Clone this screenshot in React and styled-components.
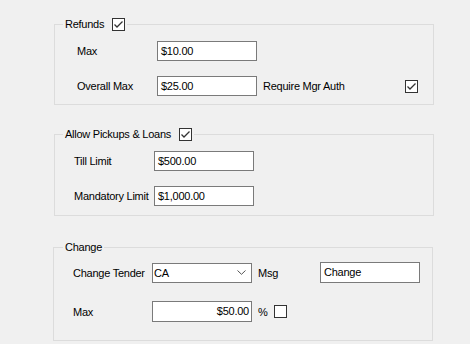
import React from "react";
import styled, { createGlobalStyle } from "styled-components";

const GlobalStyle = createGlobalStyle`
  html, body {
    margin: 0;
    padding: 0;
    background: #f0f0f0;
  }
  body {
    font-family: "Liberation Sans", Arial, sans-serif;
    font-size: 11px;
    letter-spacing: -0.25px;
    color: #000;
  }
`;

const Page = styled.div`
  width: 470px;
  height: 344px;
  box-sizing: border-box;
  padding: 18px 0 0 54px;
  overflow: hidden;
`;

const Group = styled.fieldset`
  width: 380px;
  box-sizing: border-box;
  margin: ${(p) => p.$top || 0}px 0 0 ${(p) => p.$shift || 0}px;
  padding: ${(p) => p.$pad};
  border: 1px solid #dcdcdc;
  display: flex;
  flex-direction: column;
  gap: ${(p) => p.$gap}px;
  min-width: 0;
`;

const Legend = styled.legend`
  margin-left: ${(p) => p.$x}px;
  padding: 0 2px;
  height: 13px;
  line-height: 13px;
  display: flex;
  align-items: center;
  gap: 8px;
`;

const Row = styled.div`
  display: flex;
  align-items: center;
  height: ${(p) => p.$h || 20}px;
`;

const Label = styled.span`
  width: ${(p) => p.$w}px;
  flex-shrink: 0;
  white-space: nowrap;
`;

const Input = styled.div`
  width: 100px;
  height: ${(p) => p.$h || 20}px;
  box-sizing: border-box;
  border: 1px solid #7a7a7a;
  background: #fff;
  padding: 0 ${(p) => (p.$right ? 2 : 3)}px;
  line-height: ${(p) => (p.$h || 20) - 2}px;
  text-align: ${(p) => (p.$right ? "right" : "left")};
  white-space: nowrap;
`;

const Select = styled.div`
  width: 100px;
  height: 20px;
  box-sizing: border-box;
  border: 1px solid #7a7a7a;
  background: #fff;
  display: flex;
  align-items: center;
  justify-content: space-between;
  padding: 0 5px 0 1px;
`;

const Caption = styled.span`
  margin-left: 6px;
  width: ${(p) => (p.$w ? p.$w + "px" : "auto")};
  flex-shrink: 0;
  white-space: nowrap;
`;

const Box = styled.span`
  width: 13px;
  height: 13px;
  box-sizing: border-box;
  border: 1px solid #333;
  background: #fff;
  display: inline-flex;
  align-items: center;
  justify-content: center;
  flex-shrink: 0;
`;

function CheckBox({ checked }) {
  return (
    <Box>
      {checked && (
        <svg width="11" height="11" viewBox="0 0 11 11">
          <polyline points="1.5,5.5 4,8 9.5,2.5" fill="none" stroke="#333" strokeWidth="1.3" />
        </svg>
      )}
    </Box>
  );
}

function Chevron() {
  return (
    <svg width="9" height="5" viewBox="0 0 9 5">
      <polyline points="0.5,0.5 4.5,4.3 8.5,0.5" fill="none" stroke="#555" strokeWidth="1" />
    </svg>
  );
}

export default function App() {
  return (
    <Page>
      <GlobalStyle />
      <Group $pad="10px 0 8px 22px" $gap={15}>
        <Legend $x={-14}>
          Refunds <CheckBox checked />
        </Legend>
        <Row>
          <Label $w={80}>Max</Label>
          <Input>$10.00</Input>
        </Row>
        <Row>
          <Label $w={80}>Overall Max</Label>
          <Input>$25.00</Input>
          <Caption $w={142}>Require Mgr Auth</Caption>
          <CheckBox checked />
        </Row>
      </Group>

      <Group $top={23} $pad="10px 0 9px 19px" $gap={15}>
        <Legend $x={-11}>
          Allow Pickups &amp; Loans <CheckBox checked />
        </Legend>
        <Row>
          <Label $w={80}>Till Limit</Label>
          <Input>$500.00</Input>
        </Row>
        <Row>
          <Label $w={80}>Mandatory Limit</Label>
          <Input>$1,000.00</Input>
        </Row>
      </Group>

      <Group $top={25} $shift={-1} $pad="8px 0 18px 19px" $gap={18}>
        <Legend $x={-10}>Change</Legend>
        <Row $h={21}>
          <Label $w={79}>Change Tender</Label>
          <Select>
            <span>CA</span>
            <Chevron />
          </Select>
          <Caption $w={62}>Msg</Caption>
          <Input $h={21}>Change</Input>
        </Row>
        <Row $h={21}>
          <Label $w={79}>Max</Label>
          <Input $h={21} $right>
            $50.00
          </Input>
          <Caption $w={16}>%</Caption>
          <CheckBox />
        </Row>
      </Group>
    </Page>
  );
}
